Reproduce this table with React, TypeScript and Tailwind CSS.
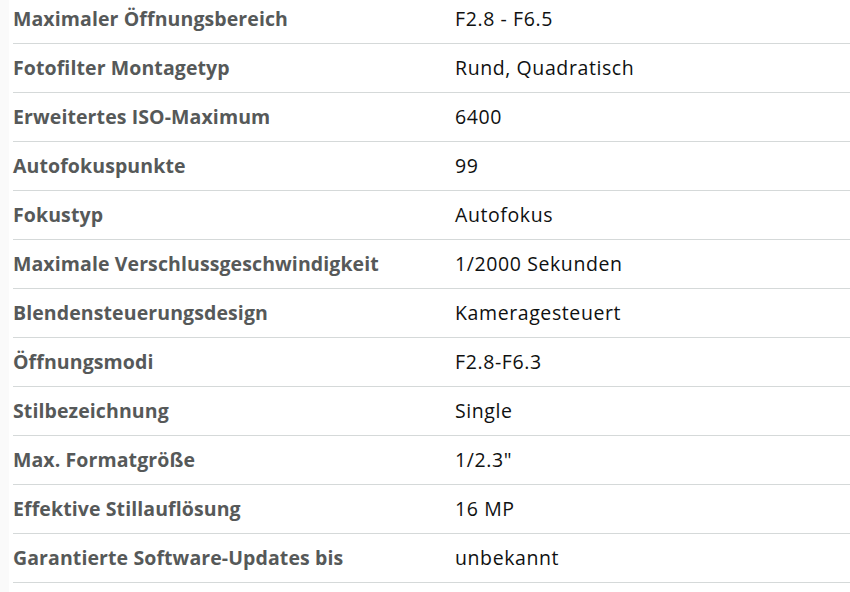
const rows: [string, string][] = [
  ["Maximaler Öffnungsbereich", "F2.8 - F6.5"],
  ["Fotofilter Montagetyp", "Rund, Quadratisch"],
  ["Erweitertes ISO-Maximum", "6400"],
  ["Autofokuspunkte", "99"],
  ["Fokustyp", "Autofokus"],
  ["Maximale Verschlussgeschwindigkeit", "1/2000 Sekunden"],
  ["Blendensteuerungsdesign", "Kameragesteuert"],
  ["Öffnungsmodi", "F2.8-F6.3"],
  ["Stilbezeichnung", "Single"],
  ["Max. Formatgröße", "1/2.3\""],
  ["Effektive Stillauflösung", "16 MP"],
  ["Garantierte Software-Updates bis", "unbekannt"],
];

export default function App() {
  return (
    <div className="flex h-[592px] w-[850px] overflow-hidden bg-white font-['Open_Sans',sans-serif]">
      {/* faint left gutter */}
      <div className="w-[9px] shrink-0 bg-[#fafafa]" />
      <div className="ml-[4px] flex-1 -mt-[5px]">
        {rows.map(([label, value]) => (
          <div
            key={label}
            className="flex h-[49px] items-center border-b border-[#d5d9d9]"
          >
            <div className="w-[442px] shrink-0 text-[19.5px] font-bold tracking-[0.1px] text-[#565959]">
              {label}
            </div>
            <div className="text-[19.5px] tracking-[0.6px] text-[#0f1111]">{value}</div>
          </div>
        ))}
      </div>
    </div>
  );
}
